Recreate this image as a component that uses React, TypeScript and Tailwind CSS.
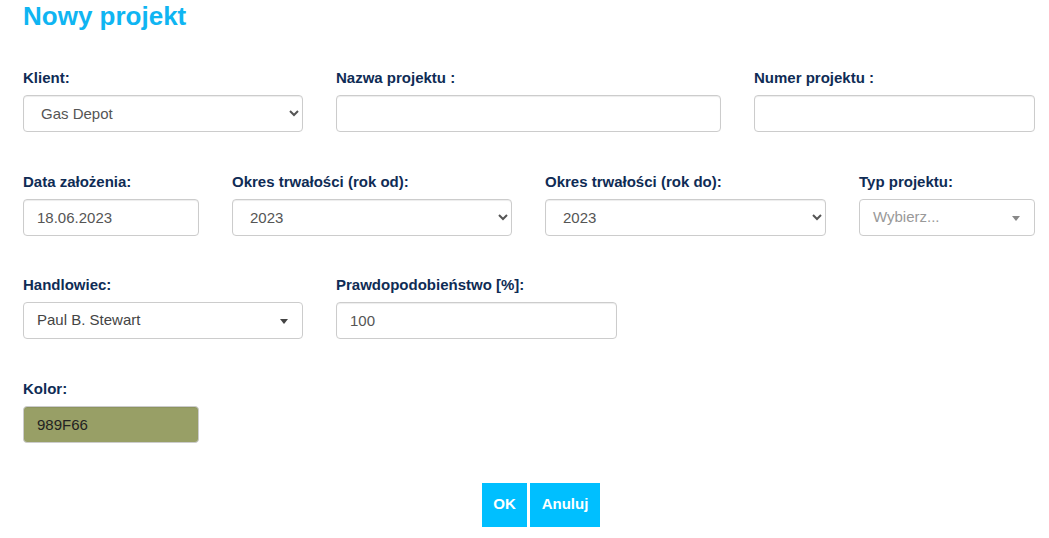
import type { ReactNode } from "react";

const font = { fontFamily: '"Liberation Sans", Arial, sans-serif' };

function Field({ label, width, children }: { label: string; width: string; children: ReactNode }) {
  return (
    <div className={`flex flex-col shrink-0 ${width}`}>
      <label className="text-[15px] leading-[20px] font-bold text-[#0f2c55] mb-[7px]">{label}</label>
      {children}
    </div>
  );
}

const boxCls =
  "h-[37px] w-full rounded-[4px] border border-[#cccccc] bg-white text-[15px] text-[#555555] shadow-[inset_0_1px_1px_rgba(0,0,0,0.075)] outline-none";

function TextBox({ value = "", bg }: { value?: string; bg?: string }) {
  return (
    <input
      readOnly
      value={value}
      className={`${boxCls} px-[13px] ${bg ?? ""}`}
    />
  );
}

function NativeSelect({ value }: { value: string }) {
  return (
    <select defaultValue={value} className={`${boxCls} pl-[13px] pr-[8px]`}>
      <option>{value}</option>
    </select>
  );
}

// select2-style dropdown with a small filled caret
function Select2({ value, placeholder }: { value?: string; placeholder?: string }) {
  return (
    <div className="relative h-[37px] w-full rounded-[4px] border border-[#cccccc] bg-white flex items-center pl-[13px]">
      <span className={`text-[15px] ${value ? "text-[#444444]" : "text-[#999999]"}`}>{value ?? placeholder}</span>
      <span
        className={`absolute right-[14px] top-[16px] w-0 h-0 border-l-[4px] border-r-[4px] border-t-[5px] border-l-transparent border-r-transparent ${
          value ? "border-t-[#444444]" : "border-t-[#888888]"
        }`}
      />
    </div>
  );
}

export default function App() {
  return (
    <div className="bg-white min-h-[538px] pl-[23px] pr-[14px]" style={font}>
      <h1 className="text-[26px] leading-[32px] font-bold text-[#0fb5f2]">Nowy projekt</h1>

      <div className="mt-[36px] flex flex-col gap-[39.5px]">
        <div className="flex gap-[33px]">
          <Field label="Klient:" width="w-[280px]">
            <NativeSelect value="Gas Depot" />
          </Field>
          <Field label="Nazwa projektu :" width="w-[385px]">
            <TextBox />
          </Field>
          <Field label="Numer projektu :" width="w-[281px]">
            <TextBox />
          </Field>
        </div>

        <div className="flex gap-[33px]">
          <Field label="Data założenia:" width="w-[176px]">
            <TextBox value="18.06.2023" />
          </Field>
          <Field label="Okres trwałości (rok od):" width="w-[280px]">
            <NativeSelect value="2023" />
          </Field>
          <Field label="Okres trwałości (rok do):" width="w-[281px]">
            <NativeSelect value="2023" />
          </Field>
          <Field label="Typ projektu:" width="w-[176px]">
            <Select2 placeholder="Wybierz..." />
          </Field>
        </div>

        <div className="flex gap-[33px]">
          <Field label="Handlowiec:" width="w-[280px]">
            <Select2 value="Paul B. Stewart" />
          </Field>
          <Field label="Prawdopodobieństwo [%]:" width="w-[281px]">
            <TextBox value="100" />
          </Field>
        </div>

        <div className="flex">
          <Field label="Kolor:" width="w-[176px]">
            <TextBox value="989F66" bg="!bg-[#989f66] !text-[#222222]" />
          </Field>
        </div>
      </div>

      <div className="mt-[40px] ml-[459px] flex gap-[3px]">
        <button className="h-[44px] w-[45px] bg-[#00bfff] text-white text-[15px] font-bold">OK</button>
        <button className="h-[44px] w-[70px] bg-[#00bfff] text-white text-[15px] font-bold">Anuluj</button>
      </div>
    </div>
  );
}
